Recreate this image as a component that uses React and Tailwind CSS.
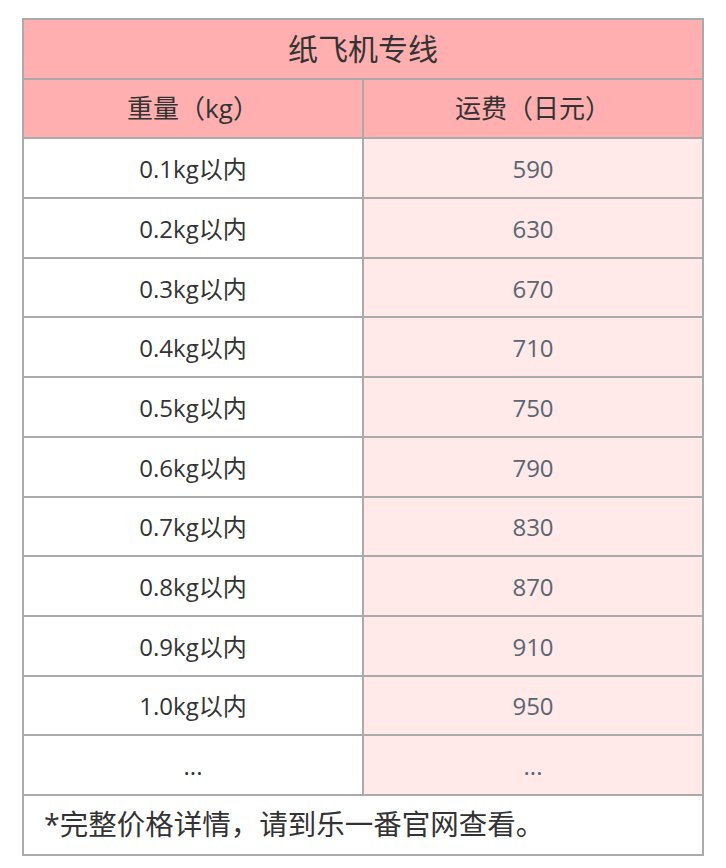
import React from "react";

const rows = [
  ["0.1kg以内", "590"],
  ["0.2kg以内", "630"],
  ["0.3kg以内", "670"],
  ["0.4kg以内", "710"],
  ["0.5kg以内", "750"],
  ["0.6kg以内", "790"],
  ["0.7kg以内", "830"],
  ["0.8kg以内", "870"],
  ["0.9kg以内", "910"],
  ["1.0kg以内", "950"],
  ["...", "..."],
];

const App = () => {
  return (
    <div
      className="bg-white min-h-[868px] pt-[18px] pl-[22px]"
      style={{ fontFamily: '"Open Sans", "Noto Sans CJK SC", sans-serif' }}
    >
      <table className="w-[682px] border-collapse border-2 border-[#aaaaaa] text-[#333333]">
        <thead>
          {/* Title */}
          <tr className="h-[59.7px] bg-[#ffafaf]">
            <th
              colSpan={2}
              className="border-2 border-[#aaaaaa] text-[30px] font-normal text-center"
            >
              纸飞机专线
            </th>
          </tr>
          {/* Column headers */}
          <tr className="h-[59.7px] bg-[#ffafaf]">
            <th className="w-1/2 border-2 border-[#aaaaaa] text-[26px] font-normal text-center">
              重量（kg）
            </th>
            <th className="w-1/2 border-2 border-[#aaaaaa] text-[26px] font-normal text-center">
              运费（日元）
            </th>
          </tr>
        </thead>
        <tbody>
          {rows.map(([weight, price], i) => (
            <tr key={i} className="h-[59.7px]">
              <td className="border-2 border-[#aaaaaa] bg-white text-[24px] text-center pt-[2px]">
                {weight}
              </td>
              <td className="border-2 border-[#aaaaaa] bg-[#ffe9e9] text-[24px] text-center text-[#5a6570] pt-[2px]">
                {price}
              </td>
            </tr>
          ))}
          {/* Footer note */}
          <tr className="h-[59.7px]">
            <td
              colSpan={2}
              className="border-2 border-[#aaaaaa] bg-white text-[28.5px] pl-[20px] text-left"
            >
              *完整价格详情，请到乐一番官网查看。
            </td>
          </tr>
        </tbody>
      </table>
    </div>
  );
};

export default App;
